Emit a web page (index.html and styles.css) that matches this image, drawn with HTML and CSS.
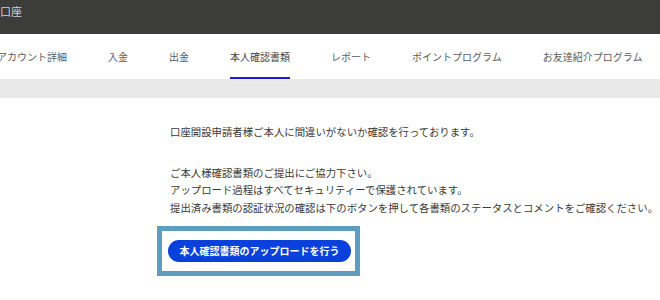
FILE: index.html
```html
<!DOCTYPE html>
<html lang="ja">
<head>
	<meta charset="UTF-8">
	<title>口座</title>
	<link rel="stylesheet" href="styles.css">
</head>
<body>
	<div class="top">口座</div>
	<ul class="tabs">
		<li>アカウント詳細</li>
		<li>入金</li>
		<li>出金</li>
		<li class="active">本人確認書類</li>
		<li>レポート</li>
		<li>ポイントプログラム</li>
		<li>お友達紹介プログラム</li>
	</ul>
	<div class="band"></div>
	<div class="content">
		<p>口座開設申請者様ご本人に間違いがないか確認を行っております。</p>
		<p class="second">ご本人様確認書類のご提出にご協力下さい。<br>アップロード過程はすべてセキュリティーで保護されています。<br>提出済み書類の認証状況の確認は下のボタンを押して各書類のステータスとコメントをご確認ください。</p>
		<div class="frame">
			<a class="btn">本人確認書類のアップロードを行う</a>
		</div>
	</div>
</body>
</html>
```

FILE: styles.css
```css
body{margin: 0; font-family: "Noto Sans CJK JP", "Noto Sans", sans-serif; background: #fff; overflow: hidden;}
ul,li,p{margin: 0; padding: 0; list-style: none;}
.top{height: 34px; background: #3c3c3b; color: #cfcfcf; font-size: 11px; line-height: 22px; padding-left: 0;}
.tabs{display: flex; gap: 41px; height: 45px; margin-left: -3px; white-space: nowrap;}
.tabs li{font-size: 10px; line-height: 12px; padding: 17px 0 14px; border-bottom: 2px solid transparent; color: #5c5c5c;}
.tabs .active{border-bottom-color: #1c1cd9; color: #444;}
.band{height: 19px; background: #e9e9e9;}
.content{padding: 25px 0 0 170px; font-size: 10.4px; line-height: 17.5px; color: #3a3a3a; white-space: nowrap;}
.second{margin-top: 23px;}
.frame{display: inline-block; margin: 10px 0 0 -13px; border: 5px solid #5f9dbf; padding: 9px 4px 9px 6px;}
.btn{display: block; width: 183px; height: 22px; line-height: 22px; border-radius: 11px; background: #0a40dc; color: #fff; font-size: 10px; font-weight: bold; text-align: center;}
```
